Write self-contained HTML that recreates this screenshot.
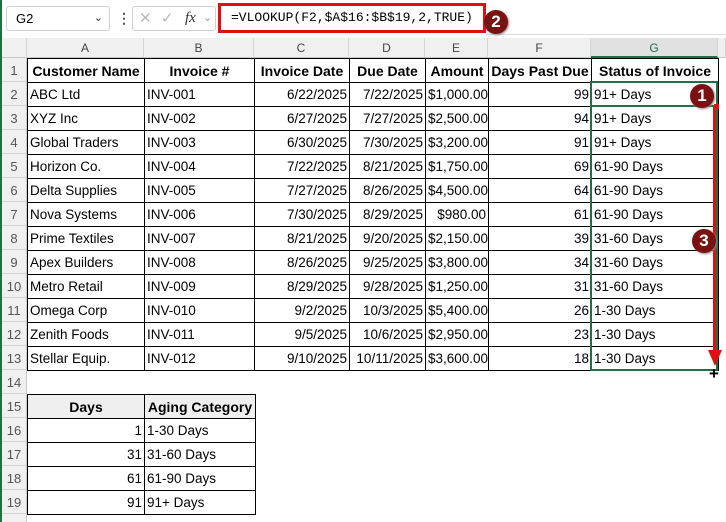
<!DOCTYPE html>
<html><head><style>
*{margin:0;padding:0;box-sizing:border-box}
html,body{width:726px;height:522px;overflow:hidden}
body{background:#fff;font-family:"Liberation Sans",sans-serif;position:relative}
.abs{position:absolute}
.rh{position:absolute;left:2px;width:25px;height:24px;background:#f0f0f0;border-bottom:1px solid #d4d4d4;border-right:1px solid #c8c8c8;color:#555;font-size:13px;text-align:center;line-height:26px}
.ch{position:absolute;top:38px;height:20px;background:#f0f0f0;border-right:1px solid #d4d4d4;border-bottom:1px solid #c8c8c8;color:#444;font-size:12px;text-align:center;line-height:20px}
table{border-collapse:collapse;position:absolute;table-layout:fixed}
td{border:1px solid #000;height:24px;font-size:13.5px;padding:0 2px;white-space:nowrap;overflow:hidden;color:#000}
td.r{text-align:right}
th{border:1px solid #000;height:24px;font-size:14px;font-weight:bold;text-align:center;padding:0 1px;white-space:nowrap;overflow:hidden}
.c{position:absolute;width:24px;height:24px;border-radius:50%;background:#7a1212;color:#fff;font-weight:bold;font-size:17px;text-align:center;line-height:24px;box-shadow:1px 1px 2px #888}
</style></head><body>
<div class="abs" style="left:0;top:0;width:2px;height:522px;background:#1e7145"></div>
<div class="abs" style="left:6px;top:6px;width:104px;height:25px;border:1px solid #d0d0d0;border-radius:3px;font-size:13px;line-height:23px;padding-left:9px">G2<span style="position:absolute;right:6px;top:0;font-size:11px;color:#333">&#8964;</span></div>
<div class="abs" style="left:117px;top:10px;font-size:14px;color:#555;font-weight:bold">&#8942;</div>
<div class="abs" style="left:132px;top:6px;width:84px;height:25px;border:1px solid #d0d0d0;border-radius:3px;font-size:15px;line-height:23px;color:#bbb">
<span style="position:absolute;left:6px">&#10005;</span><span style="position:absolute;left:28px">&#10003;</span><span style="position:absolute;left:52px;color:#333;font-style:italic;font-family:'Liberation Serif',serif">fx</span><span style="position:absolute;left:70px;font-size:11px;color:#999">&#8964;</span></div>
<div class="abs" style="left:218px;top:3px;width:268px;height:30px;border:3px solid #e01010;font-family:'Liberation Mono',monospace;font-size:13px;line-height:24px;padding-left:10px">=VLOOKUP(F2,$A$16:$B$19,2,TRUE)</div>
<div class="abs" style="left:486px;top:34px;width:240px;height:1px;background:#ddd"></div>
<div class="ch" style="left:2px;width:25px"></div>
<div class="ch" style="left:27px;width:117px">A</div>
<div class="ch" style="left:144px;width:110px">B</div>
<div class="ch" style="left:254px;width:95px">C</div>
<div class="ch" style="left:349px;width:76px">D</div>
<div class="ch" style="left:425px;width:63px">E</div>
<div class="ch" style="left:488px;width:103px">F</div>
<div class="ch" style="left:591px;width:127px;color:#1e7145;background:#e1e1e1;border-bottom:2px solid #1e7145">G</div>
<div class="ch" style="left:718px;width:8px"></div>
<div class="rh" style="top:58px">1</div><div class="rh" style="top:82px">2</div>
<div class="rh" style="top:106px">3</div><div class="rh" style="top:130px">4</div>
<div class="rh" style="top:154px">5</div><div class="rh" style="top:178px">6</div>
<div class="rh" style="top:202px">7</div><div class="rh" style="top:226px">8</div>
<div class="rh" style="top:250px">9</div><div class="rh" style="top:274px">10</div>
<div class="rh" style="top:298px">11</div><div class="rh" style="top:322px">12</div>
<div class="rh" style="top:346px">13</div><div class="rh" style="top:370px">14</div>
<div class="rh" style="top:394px">15</div><div class="rh" style="top:418px">16</div>
<div class="rh" style="top:442px">17</div><div class="rh" style="top:466px">18</div>
<div class="rh" style="top:490px">19</div><div class="rh" style="top:514px"></div>

<table style="left:27px;top:58px;width:691px">
<colgroup><col style="width:117px"><col style="width:110px"><col style="width:95px"><col style="width:76px"><col style="width:63px"><col style="width:103px"><col style="width:127px"></colgroup>
<tr><th>Customer Name</th><th>Invoice #</th><th>Invoice Date</th><th>Due Date</th><th>Amount</th><th>Days Past Due</th><th>Status of Invoice</th></tr>
<tr><td>ABC Ltd</td><td>INV-001</td><td class="r">6/22/2025</td><td class="r">7/22/2025</td><td class="r">$1,000.00</td><td class="r">99</td><td>91+ Days</td></tr>
<tr><td>XYZ Inc</td><td>INV-002</td><td class="r">6/27/2025</td><td class="r">7/27/2025</td><td class="r">$2,500.00</td><td class="r">94</td><td>91+ Days</td></tr>
<tr><td>Global Traders</td><td>INV-003</td><td class="r">6/30/2025</td><td class="r">7/30/2025</td><td class="r">$3,200.00</td><td class="r">91</td><td>91+ Days</td></tr>
<tr><td>Horizon Co.</td><td>INV-004</td><td class="r">7/22/2025</td><td class="r">8/21/2025</td><td class="r">$1,750.00</td><td class="r">69</td><td>61-90 Days</td></tr>
<tr><td>Delta Supplies</td><td>INV-005</td><td class="r">7/27/2025</td><td class="r">8/26/2025</td><td class="r">$4,500.00</td><td class="r">64</td><td>61-90 Days</td></tr>
<tr><td>Nova Systems</td><td>INV-006</td><td class="r">7/30/2025</td><td class="r">8/29/2025</td><td class="r">$980.00</td><td class="r">61</td><td>61-90 Days</td></tr>
<tr><td>Prime Textiles</td><td>INV-007</td><td class="r">8/21/2025</td><td class="r">9/20/2025</td><td class="r">$2,150.00</td><td class="r">39</td><td>31-60 Days</td></tr>
<tr><td>Apex Builders</td><td>INV-008</td><td class="r">8/26/2025</td><td class="r">9/25/2025</td><td class="r">$3,800.00</td><td class="r">34</td><td>31-60 Days</td></tr>
<tr><td>Metro Retail</td><td>INV-009</td><td class="r">8/29/2025</td><td class="r">9/28/2025</td><td class="r">$1,250.00</td><td class="r">31</td><td>31-60 Days</td></tr>
<tr><td>Omega Corp</td><td>INV-010</td><td class="r">9/2/2025</td><td class="r">10/3/2025</td><td class="r">$5,400.00</td><td class="r">26</td><td>1-30 Days</td></tr>
<tr><td>Zenith Foods</td><td>INV-011</td><td class="r">9/5/2025</td><td class="r">10/6/2025</td><td class="r">$2,950.00</td><td class="r">23</td><td>1-30 Days</td></tr>
<tr><td>Stellar Equip.</td><td>INV-012</td><td class="r">9/10/2025</td><td class="r">10/11/2025</td><td class="r">$3,600.00</td><td class="r">18</td><td>1-30 Days</td></tr>
</table>

<table style="left:27px;top:394px;width:228px">
<colgroup><col style="width:117px"><col style="width:111px"></colgroup>
<tr><th style="background:#efefef">Days</th><th style="background:#efefef">Aging Category</th></tr>
<tr><td class="r">1</td><td>1-30 Days</td></tr>
<tr><td class="r">31</td><td>31-60 Days</td></tr>
<tr><td class="r">61</td><td>61-90 Days</td></tr>
<tr><td class="r">91</td><td>91+ Days</td></tr>
</table>

<div class="abs" style="left:590px;top:81px;width:128px;height:290px;border:2px solid #1e7145"></div>
<div class="abs" style="left:590px;top:81px;width:128px;height:26px;border:2px solid #1e7145"></div>
<div class="abs" style="left:714px;top:104px;width:5px;height:5px;background:#e01010"></div>
<div class="abs" style="left:713px;top:107px;width:3px;height:245px;background:#e01010"></div>
<div class="abs" style="left:708px;top:350px;width:0;height:0;border-left:7px solid transparent;border-right:7px solid transparent;border-top:16px solid #e01010"></div>
<div class="abs" style="left:709px;top:365px;font-size:17px;line-height:17px;font-weight:bold">+</div>
<div class="c" style="left:690px;top:84px">1</div>
<div class="c" style="left:484px;top:10px">2</div>
<div class="c" style="left:692px;top:229px">3</div>
</body></html>
